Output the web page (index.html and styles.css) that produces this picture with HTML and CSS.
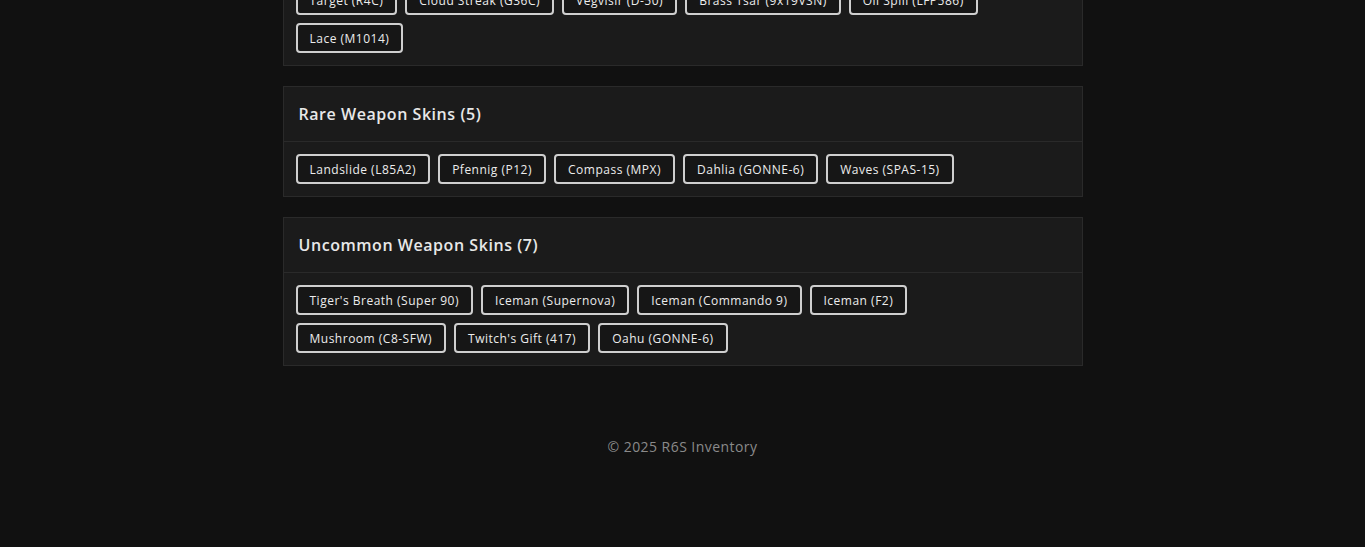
FILE: index.html
```html
<!DOCTYPE html>
<html lang="en">
<head>
<meta charset="utf-8">
<title>R6S Inventory</title>
<link rel="stylesheet" href="styles.css">
</head>
<body>
<main class="container">
  <section class="card">
    <div class="card-header"><h2>Epic Weapon Skins (6)</h2></div>
    <div class="card-body">
      <span class="chip">Target (R4C)</span>
      <span class="chip">Cloud Streak (G36C)</span>
      <span class="chip">Vegvisir (D-50)</span>
      <span class="chip">Brass Tsar (9x19VSN)</span>
      <span class="chip">Oil Spill (LFP586)</span>
      <span class="chip">Lace (M1014)</span>
    </div>
  </section>
  <section class="card">
    <div class="card-header"><h2>Rare Weapon Skins (5)</h2></div>
    <div class="card-body">
      <span class="chip">Landslide (L85A2)</span>
      <span class="chip">Pfennig (P12)</span>
      <span class="chip">Compass (MPX)</span>
      <span class="chip">Dahlia (GONNE-6)</span>
      <span class="chip">Waves (SPAS-15)</span>
    </div>
  </section>
  <section class="card">
    <div class="card-header"><h2>Uncommon Weapon Skins (7)</h2></div>
    <div class="card-body">
      <span class="chip">Tiger's Breath (Super 90)</span>
      <span class="chip">Iceman (Supernova)</span>
      <span class="chip">Iceman (Commando 9)</span>
      <span class="chip">Iceman (F2)</span>
      <span class="chip">Mushroom (C8-SFW)</span>
      <span class="chip">Twitch's Gift (417)</span>
      <span class="chip">Oahu (GONNE-6)</span>
    </div>
  </section>
</main>
<footer class="footer">© 2025 R6S Inventory</footer>
</body>
</html>
```
FILE: styles.css
```css
html, body {
  margin: 0;
  padding: 0;
  background: #111111;
  color: #e6e6e6;
  font-family: "Open Sans", "Liberation Sans", sans-serif;
}
body {
  overflow: hidden;
  height: 547px;
}
.container {
  width: 800px;
  margin: -83px auto 0;
  display: flex;
  flex-direction: column;
  gap: 20px;
}
.card {
  background: #1b1b1b;
  border: 1px solid #2a2a2a;
}
.card-header {
  height: 54px;
  display: flex;
  align-items: center;
  padding: 0 15px;
  border-bottom: 1px solid #2a2a2a;
}
.card-header h2 {
  margin: 0;
  font-size: 16px;
  font-weight: 600;
  color: #e8e8e8;
  letter-spacing: 0.55px;
}
.card-body {
  display: flex;
  flex-wrap: wrap;
  gap: 8px;
  padding: 12px 18px 12px 12px;
}
.chip {
  box-sizing: border-box;
  height: 30px;
  display: inline-flex;
  align-items: center;
  padding: 0 12px;
  border: 2px solid #cfcfcf;
  border-radius: 4px;
  font-size: 12px;
  letter-spacing: 0.5px;
  color: #ececec;
  background: #161616;
}
.footer {
  margin-top: 71px;
  text-align: center;
  font-size: 14px;
  color: #8a8a8a;
  letter-spacing: 0.45px;
}
```
